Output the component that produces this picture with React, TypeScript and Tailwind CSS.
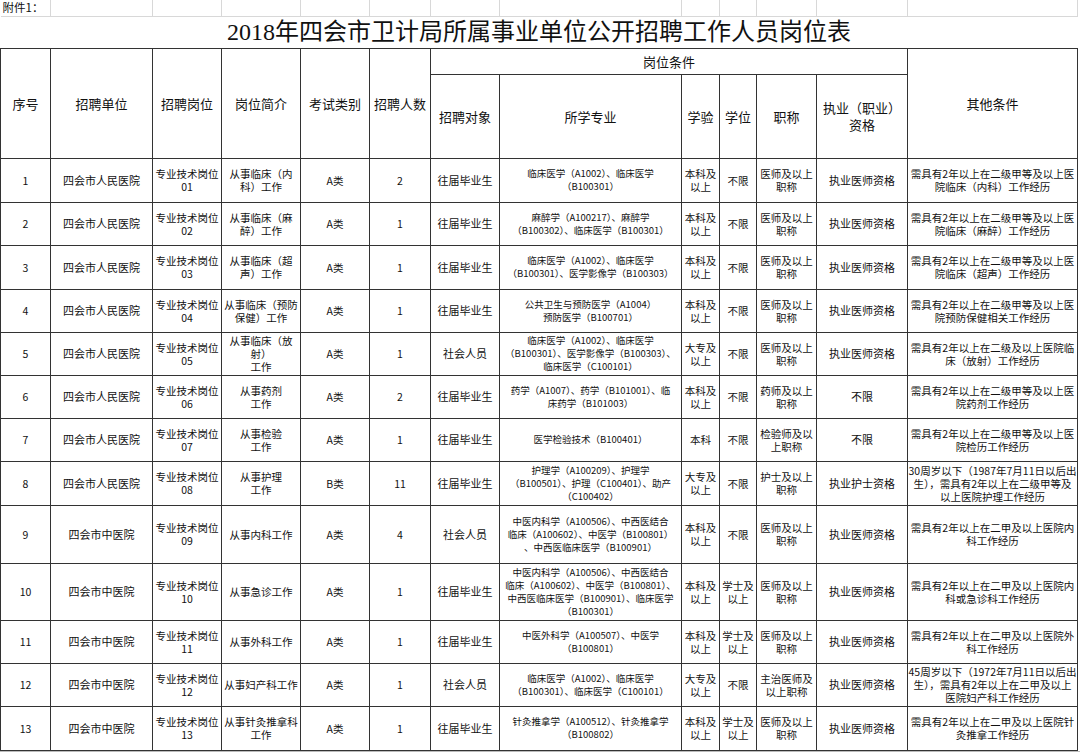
const cols = [50, 102, 69, 79, 69, 61, 69, 182, 38, 37, 60, 91, 170]

type Row = { h: number; cells: string[] }

const rows: Row[] = [
  { h: 44, cells: ["1", "四会市人民医院", "专业技术岗位\n01", "从事临床（内\n科）工作", "A类", "2", "往届毕业生", "临床医学（A1002）、临床医学\n（B100301）", "本科及\n以上", "不限", "医师及以上\n职称", "执业医师资格", "需具有2年以上在二级甲等及以上医\n院临床（内科）工作经历"] },
  { h: 43, cells: ["2", "四会市人民医院", "专业技术岗位\n02", "从事临床（麻\n醉）工作", "A类", "1", "往届毕业生", "麻醉学（A100217）、麻醉学\n（B100302）、临床医学（B100301）", "本科及\n以上", "不限", "医师及以上\n职称", "执业医师资格", "需具有2年以上在二级甲等及以上医\n院临床（麻醉）工作经历"] },
  { h: 44, cells: ["3", "四会市人民医院", "专业技术岗位\n03", "从事临床（超\n声）工作", "A类", "1", "往届毕业生", "临床医学（A1002）、临床医学\n（B100301）、医学影像学（B100303）", "本科及\n以上", "不限", "医师及以上\n职称", "执业医师资格", "需具有2年以上在二级甲等及以上医\n院临床（超声）工作经历"] },
  { h: 43, cells: ["4", "四会市人民医院", "专业技术岗位\n04", "从事临床（预防\n保健）工作", "A类", "1", "往届毕业生", "公共卫生与预防医学（A1004）\n预防医学（B100701）", "本科及\n以上", "不限", "医师及以上\n职称", "执业医师资格", "需具有2年以上在二级甲等及以上医\n院预防保健相关工作经历"] },
  { h: 43, cells: ["5", "四会市人民医院", "专业技术岗位\n05", "从事临床（放\n射）\n工作", "A类", "1", "社会人员", "临床医学（A1002）、临床医学\n（B100301）、医学影像学（B100303）、\n临床医学（C100101）", "大专及\n以上", "不限", "医师及以上\n职称", "执业医师资格", "需具有2年以上在二级及以上医院临\n床（放射）工作经历"] },
  { h: 43, cells: ["6", "四会市人民医院", "专业技术岗位\n06", "从事药剂\n工作", "A类", "2", "往届毕业生", "药学（A1007）、药学（B101001）、临\n床药学（B101003）", "本科及\n以上", "不限", "药师及以上\n职称", "不限", "需具有2年以上在二级甲等及以上医\n院药剂工作经历"] },
  { h: 43, cells: ["7", "四会市人民医院", "专业技术岗位\n07", "从事检验\n工作", "A类", "1", "往届毕业生", "医学检验技术（B100401）", "本科", "不限", "检验师及以\n上职称", "不限", "需具有2年以上在二级甲等及以上医\n院检历工作经历"] },
  { h: 44, cells: ["8", "四会市人民医院", "专业技术岗位\n08", "从事护理\n工作", "B类", "11", "往届毕业生", "护理学（A100209）、护理学\n（B100501）、护理（C100401）、助产\n（C100402）", "大专及\n以上", "不限", "护士及以上\n职称", "执业护士资格", "30周岁以下（1987年7月11日以后出\n生），需具有2年以上在二级甲等及\n以上医院护理工作经历"] },
  { h: 58, cells: ["9", "四会市中医院", "专业技术岗位\n09", "从事内科工作", "A类", "4", "社会人员", "中医内科学（A100506）、中西医结合\n临床（A100602）、中医学（B100801）\n、中西医临床医学（B100901）", "本科及\n以上", "不限", "医师及以上\n职称", "执业医师资格", "需具有2年以上在二甲及以上医院内\n科工作经历"] },
  { h: 57, cells: ["10", "四会市中医院", "专业技术岗位\n10", "从事急诊工作", "A类", "1", "往届毕业生", "中医内科学（A100506）、中西医结合\n临床（A100602）、中医学（B100801）、\n中西医临床医学（B100901）、临床医学\n（B100301）", "本科及\n以上", "学士及\n以上", "医师及以上\n职称", "执业医师资格", "需具有2年以上在二甲及以上医院内\n科或急诊科工作经历"] },
  { h: 43, cells: ["11", "四会市中医院", "专业技术岗位\n11", "从事外科工作", "A类", "1", "往届毕业生", "中医外科学（A100507）、中医学\n（B100801）", "本科及\n以上", "学士及\n以上", "医师及以上\n职称", "执业医师资格", "需具有2年以上在二甲及以上医院外\n科工作经历"] },
  { h: 43, cells: ["12", "四会市中医院", "专业技术岗位\n12", "从事妇产科工作", "A类", "1", "社会人员", "临床医学（A1002）、临床医学\n（B100301）、临床医学（C100101）", "大专及\n以上", "不限", "主治医师及\n以上职称", "执业医师资格", "45周岁以下（1972年7月11日以后出\n生），需具有2年以上在二甲及以上\n医院妇产科工作经历"] },
  { h: 44, cells: ["13", "四会市中医院", "专业技术岗位\n13", "从事针灸推拿科\n工作", "A类", "1", "往届毕业生", "针灸推拿学（A100512）、针灸推拿学\n（B100802）", "本科及\n以上", "学士及\n以上", "医师及以上\n职称", "执业医师资格", "需具有2年以上在二甲及以上医院针\n灸推拿工作经历"] },
]

const th = "border border-[#333] text-[13px] font-normal text-center align-middle whitespace-pre-line leading-[17px]"
const td = "border border-[#333] p-0 leading-[13px] text-center align-middle whitespace-pre overflow-hidden"

// font size per column: 所学专业 is the narrowest type in the sheet
const sizeFor = (i: number) => {
  if (i === 7) return "text-[9.5px]"
  if (i === 1 || i === 6 || i === 11) return "text-[11px]"
  return "text-[10.5px]"
}

export default function App() {
  return (
    <div
      className="w-[1080px] h-[752px] overflow-hidden bg-white text-[#111]"
      style={{ fontFamily: "'Noto Sans CJK SC', sans-serif" }}
    >
      <table className="table-fixed border-collapse w-[1077px]">
        <colgroup>
          {cols.map((w, i) => (
            <col key={i} style={{ width: w }} />
          ))}
        </colgroup>
        <tbody>
          <tr className="h-[16px]">
            <td className="border-r border-b border-[#d8d8d8] p-0 pl-[2px] text-[11.5px] leading-[15px] whitespace-nowrap align-middle">
              附件1：
            </td>
            {cols.slice(1).map((_, i) => (
              <td key={i} className="border-r border-b border-[#d8d8d8] p-0" />
            ))}
          </tr>
          <tr className="h-[31px]">
            <td
              colSpan={13}
              className="p-0 text-center text-[24px] leading-[31px]"
              style={{ fontFamily: "'Liberation Serif', 'Noto Sans CJK SC', serif" }}
            >
              2018年四会市卫计局所属事业单位公开招聘工作人员岗位表
            </td>
          </tr>
          <tr className="h-[26px]">
            <th rowSpan={2} className={th}>序号</th>
            <th rowSpan={2} className={th}>招聘单位</th>
            <th rowSpan={2} className={th}>招聘岗位</th>
            <th rowSpan={2} className={th}>岗位简介</th>
            <th rowSpan={2} className={th}>考试类别</th>
            <th rowSpan={2} className={th}>招聘人数</th>
            <th colSpan={6} className={`${th} text-[12px]`}>岗位条件</th>
            <th rowSpan={2} className={th}>其他条件</th>
          </tr>
          <tr className="h-[84px]">
            <th className={th}>招聘对象</th>
            <th className={th}>所学专业</th>
            <th className={th}>学验</th>
            <th className={th}>学位</th>
            <th className={th}>职称</th>
            <th className={th}>{"执业（职业）\n资格"}</th>
          </tr>
          {rows.map((r) => (
            <tr key={r.cells[0]} style={{ height: r.h }}>
              {r.cells.map((c, i) => (
                <td key={i} className={`${td} ${sizeFor(i)}`}>
                  {c}
                </td>
              ))}
            </tr>
          ))}
        </tbody>
      </table>
      <div className="h-[4px] bg-[#e4e4e4] border-t border-[#bbb]" />
    </div>
  )
}
